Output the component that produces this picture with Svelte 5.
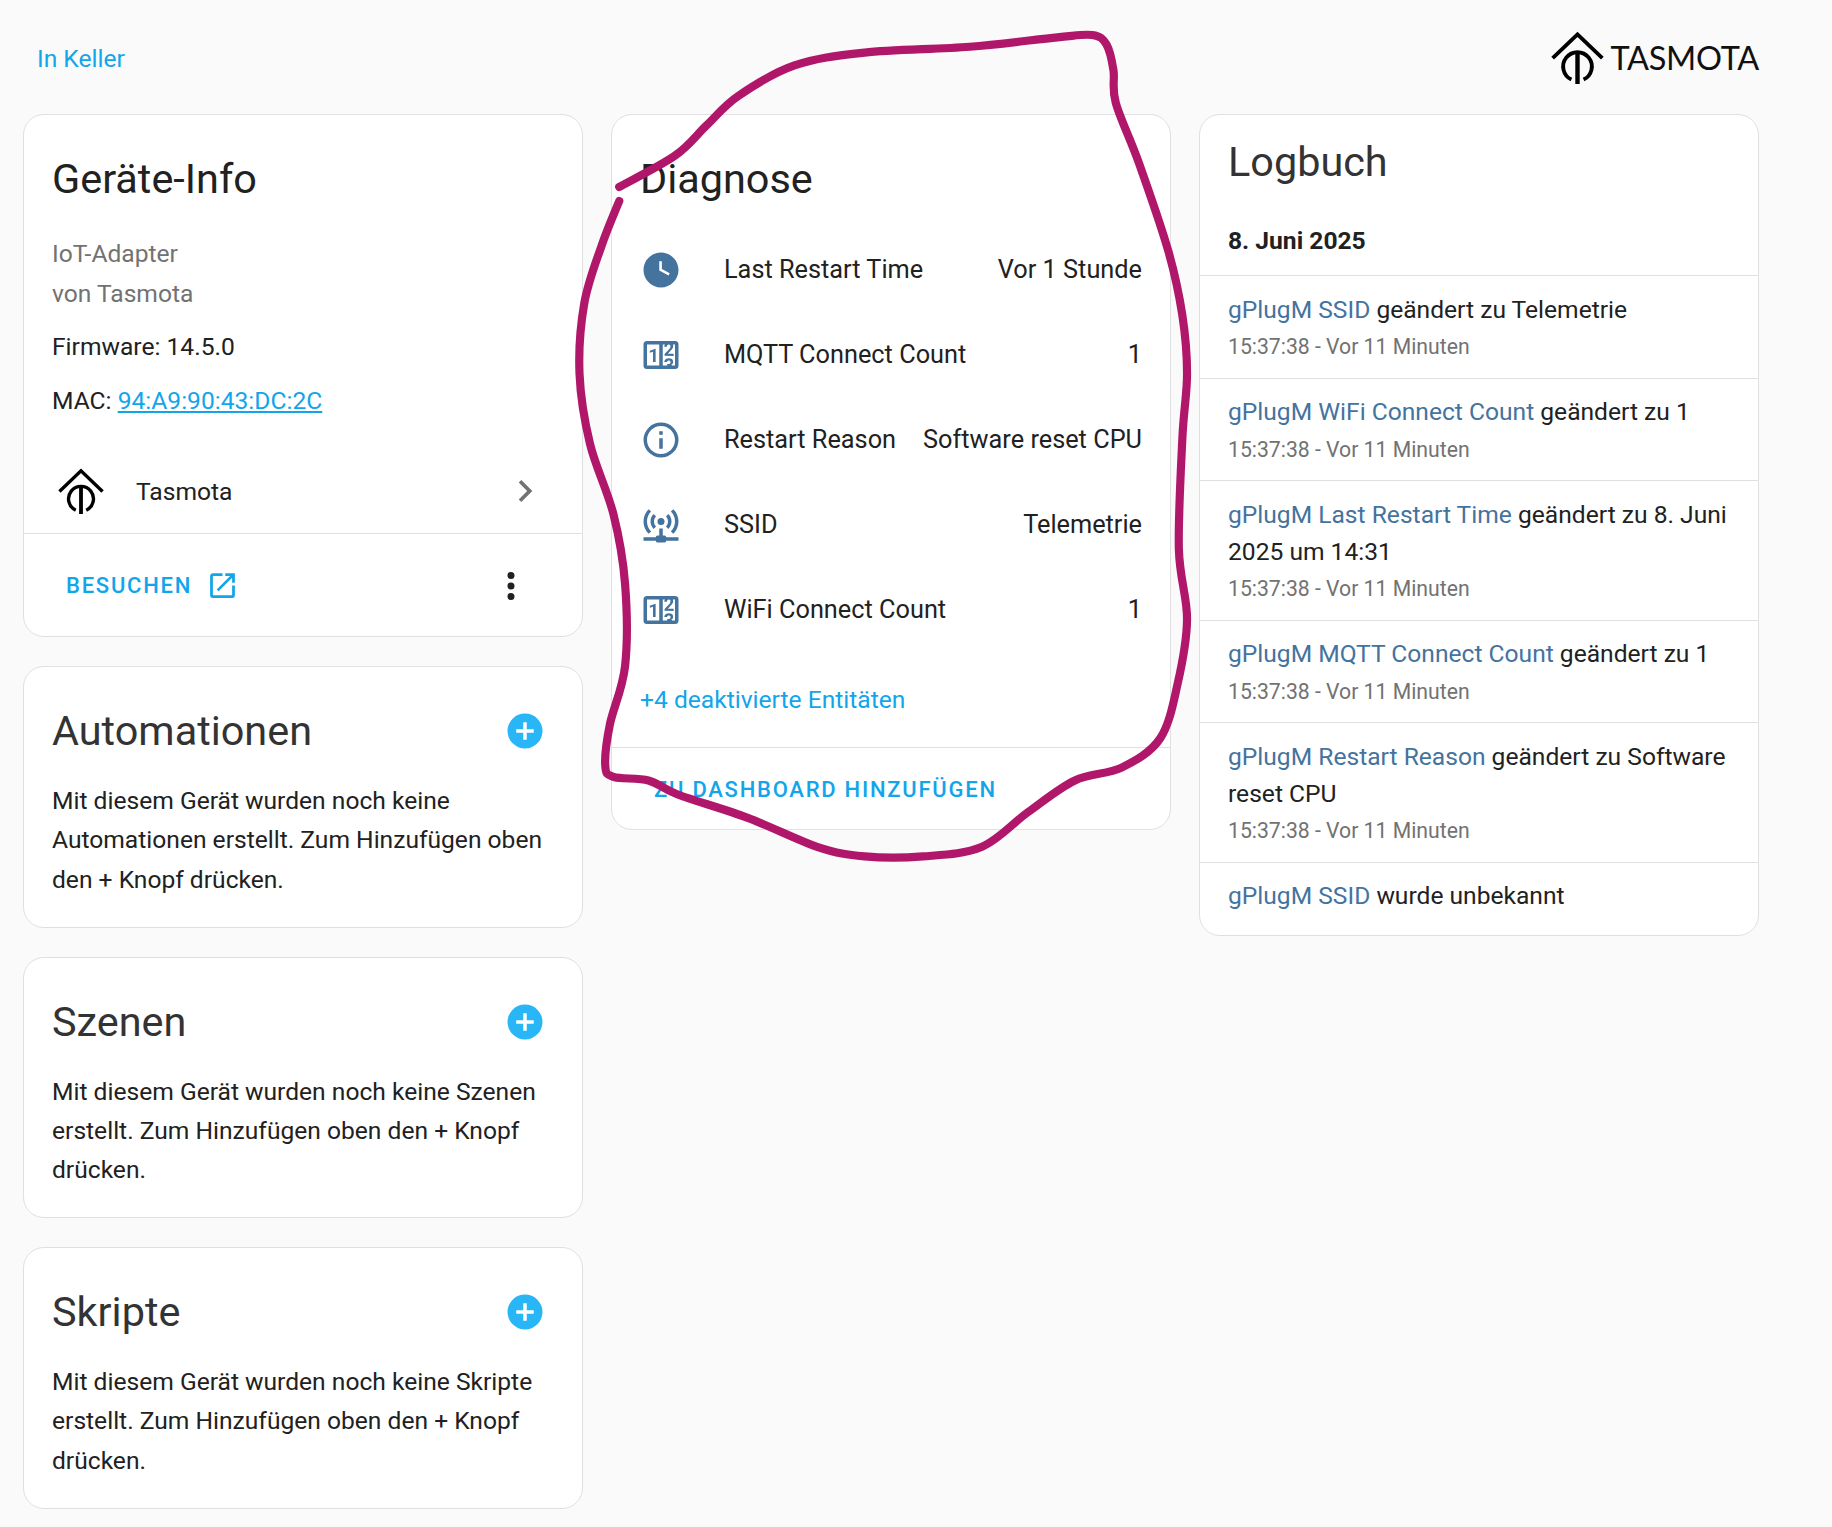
<script>
  const icons = {
    clock: 'M12 2C6.5 2 2 6.5 2 12S6.5 22 12 22 22 17.5 22 12 17.5 2 12 2M16.3 15.2L11 12.3V7H12.5V11.4L17 13.9L16.3 15.2Z',
    counter: 'M4,4H20A2,2 0 0,1 22,6V18A2,2 0 0,1 20,20H4A2,2 0 0,1 2,18V6A2,2 0 0,1 4,4M4,6V18H11V6H4M20,18V6H18.76C19,6.54 18.95,7.07 18.95,7.13C18.88,7.8 18.41,8.5 18.24,8.75L15.91,11.3L19.23,11.28L19.24,12.5L14.04,12.47L14,11.47C14,11.47 17.05,8.24 17.2,7.95C17.34,7.67 17.91,6 16.5,6C15.27,6.05 15.41,7.3 15.41,7.3L13.87,7.31C13.87,7.31 13.88,6.65 14.25,6H13V18H15.58L15.57,17.14L16.54,17.13C16.54,17.13 17.45,16.97 17.46,16.08C17.5,15.08 16.65,15.08 16.5,15.08C16.37,15.08 15.43,15.13 15.43,15.95H13.91C13.91,15.95 13.95,13.89 16.5,13.89C19.1,13.89 18.96,15.91 18.96,15.91C18.96,15.91 19,17.16 17.85,17.63L18.37,18H20M8.92,16H7.42V10.2L5.62,10.76V9.53L8.76,8.41H8.92V16Z',
    info: 'M11,9H13V7H11M12,20C7.59,20 4,16.41 4,12C4,7.59 7.59,4 12,4C16.41,4 20,7.59 20,12C20,16.41 16.41,20 12,20M12,2A10,10 0 0,0 2,12A10,10 0 0,0 12,22A10,10 0 0,0 22,12A10,10 0 0,0 12,2M11,17H13V11H11V17Z',
    network: 'M4.93,2.93C3.12,4.74 2,7.24 2,10C2,12.76 3.12,15.26 4.93,17.07L6.34,15.66C4.89,14.22 4,12.22 4,10C4,7.79 4.89,5.78 6.34,4.34L4.93,2.93M19.07,2.93L17.66,4.34C19.11,5.78 20,7.79 20,10C20,12.22 19.11,14.22 17.66,15.66L19.07,17.07C20.88,15.26 22,12.76 22,10C22,7.24 20.88,4.74 19.07,2.93M7.76,5.76C6.67,6.85 6,8.35 6,10C6,11.65 6.67,13.15 7.76,14.24L9.17,12.83C8.45,12.11 8,11.11 8,10C8,8.89 8.45,7.89 9.17,7.17L7.76,5.76M16.24,5.76L14.83,7.17C15.55,7.89 16,8.89 16,10C16,11.11 15.55,12.11 14.83,12.83L16.24,14.24C17.33,13.15 18,11.65 18,10C18,8.35 17.33,6.85 16.24,5.76M12,8A2,2 0 0,0 10,10A2,2 0 0,0 12,12A2,2 0 0,0 14,10A2,2 0 0,0 12,8M11,14V18H10A1,1 0 0,0 9,19H2V21H9A1,1 0 0,0 10,22H14A1,1 0 0,0 15,21H22V19H15A1,1 0 0,0 14,18H13V14H11Z',
    open: 'M14,3V5H17.59L7.76,14.83L9.17,16.24L19,6.41V10H21V3M19,19H5V5H12V3H5C3.89,3 3,3.9 3,5V19A2,2 0 0,0 5,21H19A2,2 0 0,0 21,19V12H19V19Z',
    dots: 'M12,16A2,2 0 0,1 14,18A2,2 0 0,1 12,20A2,2 0 0,1 10,18A2,2 0 0,1 12,16M12,10A2,2 0 0,1 14,12A2,2 0 0,1 12,14A2,2 0 0,1 10,12A2,2 0 0,1 12,10M12,4A2,2 0 0,1 14,6A2,2 0 0,1 12,8A2,2 0 0,1 10,6A2,2 0 0,1 12,4Z',
    chevron: 'M8.59,16.58L13.17,12L8.59,7.41L10,6L16,12L10,18L8.59,16.58Z',
    plus: 'M17,13H13V17H11V13H7V11H11V7H13V11H17M12,2A10,10 0 0,0 2,12A10,10 0 0,0 12,22A10,10 0 0,0 22,12A10,10 0 0,0 12,2Z'
  };

  const entities = [
    { icon: 'clock', name: 'Last Restart Time', value: 'Vor 1 Stunde' },
    { icon: 'counter', name: 'MQTT Connect Count', value: '1' },
    { icon: 'info', name: 'Restart Reason', value: 'Software reset CPU' },
    { icon: 'network', name: 'SSID', value: 'Telemetrie' },
    { icon: 'counter', name: 'WiFi Connect Count', value: '1' }
  ];

  const sections = [
    { title: 'Automationen', text: 'Mit diesem Gerät wurden noch keine Automationen erstellt. Zum Hinzufügen oben den + Knopf drücken.' },
    { title: 'Szenen', text: 'Mit diesem Gerät wurden noch keine Szenen erstellt. Zum Hinzufügen oben den + Knopf drücken.' },
    { title: 'Skripte', text: 'Mit diesem Gerät wurden noch keine Skripte erstellt. Zum Hinzufügen oben den + Knopf drücken.' }
  ];

  const log = [
    { name: 'gPlugM SSID', msg: 'geändert zu Telemetrie', time: true },
    { name: 'gPlugM WiFi Connect Count', msg: 'geändert zu 1', time: true },
    { name: 'gPlugM Last Restart Time', msg: 'geändert zu 8. Juni 2025 um 14:31', time: true },
    { name: 'gPlugM MQTT Connect Count', msg: 'geändert zu 1', time: true },
    { name: 'gPlugM Restart Reason', msg: 'geändert zu Software reset CPU', time: true },
    { name: 'gPlugM SSID', msg: 'wurde unbekannt', time: false }
  ];

  // hand-drawn marker line, points in the coordinates of the shrunk screenshot
  const scribble = [
    [530,160],[578,133],[605,107],[632,82],[680,56],[740,45],[830,40],[905,32],[935,30],[947,38],[953,60],[955,88],
    [975,140],[1000,215],[1012,270],[1016,320],[1012,375],[1009,470],[1016,530],[1008,585],[993,632],[960,657],
    [920,668],[880,695],[840,725],[790,733],[740,733],[700,725],[640,700],[580,680],[555,668],[525,665],[518,655],
    [522,620],[535,570],[535,500],[525,440],[505,380],[496,320],[500,260],[515,210],[530,172]
  ];

  function smooth(pts) {
    let d = `M${pts[0][0]},${pts[0][1]}`;
    for (let i = 0; i < pts.length - 1; i++) {
      const p0 = pts[Math.max(i - 1, 0)];
      const p1 = pts[i];
      const p2 = pts[i + 1];
      const p3 = pts[Math.min(i + 2, pts.length - 1)];
      const c1 = [p1[0] + (p2[0] - p0[0]) / 6, p1[1] + (p2[1] - p0[1]) / 6];
      const c2 = [p2[0] - (p3[0] - p1[0]) / 6, p2[1] - (p3[1] - p1[1]) / 6];
      d += `C${c1[0]},${c1[1]} ${c2[0]},${c2[1]} ${p2[0]},${p2[1]}`;
    }
    return d;
  }
</script>

{#snippet logo(size)}
  <svg class="logo" width={size} height={size} viewBox="0 0 48 48" fill="none" stroke="#000">
    <path d="M1.5 24.5L24 3L46.5 24.5" stroke-width="3.5" />
    <path d="M18.5 44A13 13 0 1 1 29.5 44" stroke-width="3.5" />
    <path d="M24 48V19" stroke-width="4" />
  </svg>
{/snippet}

{#snippet icon(name, cls)}
  <svg class={cls} viewBox="0 0 24 24"><path d={icons[name]} fill="currentColor" /></svg>
{/snippet}

<div class="page">
  <header class="top">
    <a class="area">In Keller</a>
    <div class="brand">
      {@render logo(53)}
      <span class="wordmark">TASMOTA</span>
    </div>
  </header>

  <div class="columns">
    <div class="col">
      <section class="card info">
        <h2 class="title dark">Geräte-Info</h2>
        <div class="meta">
          <div class="muted">IoT-Adapter</div>
          <div class="muted">von Tasmota</div>
          <div class="fw">Firmware: 14.5.0</div>
          <div class="fw">MAC: <a class="mac">94:A9:90:43:DC:2C</a></div>
        </div>
        <div class="device">
          {@render logo(46)}
          <span class="device-name">Tasmota</span>
          {@render icon('chevron', 'chev')}
        </div>
        <div class="actions">
          <span class="btn">BESUCHEN</span>
          {@render icon('open', 'open')}
          {@render icon('dots', 'dots')}
        </div>
      </section>

      {#each sections as s}
        <section class="card empty">
          <div class="head">
            <h2 class="title">{s.title}</h2>
            {@render icon('plus', 'plus')}
          </div>
          <p>{s.text}</p>
        </section>
      {/each}
    </div>

    <div class="col">
      <section class="card diag">
        <h2 class="title dark">Diagnose</h2>
        <div class="rows">
          {#each entities as e}
            <div class="row">
              {@render icon(e.icon, 'state')}
              <span class="name">{e.name}</span>
              <span class="value">{e.value}</span>
            </div>
          {/each}
        </div>
        <a class="disabled">+4 deaktivierte Entitäten</a>
        <div class="actions diag-actions">
          <span class="btn">ZU DASHBOARD HINZUFÜGEN</span>
        </div>
      </section>
    </div>

    <div class="col">
      <section class="card book">
        <h2 class="title">Logbuch</h2>
        <div class="date">8. Juni 2025</div>
        {#each log as l}
          <div class="entry">
            <div class="msg"><span class="entity">{l.name}</span> {l.msg}</div>
            {#if l.time}<div class="when">15:37:38 - Vor 11 Minuten</div>{/if}
          </div>
        {/each}
      </section>
    </div>
  </div>

  <svg class="marker" viewBox="0 0 1568 1307" fill="none">
    <path d={smooth(scribble)} stroke="#b0176a" stroke-width="7" stroke-linecap="round" stroke-linejoin="round" />
  </svg>
</div>

<style>
  :global(body) {
    margin: 0;
    background: #fafafa;
  }

  .page {
    position: relative;
    width: 1832px;
    height: 1527px;
    overflow: hidden;
    font-family: Roboto, sans-serif;
    font-size: 24.6px;
    color: #212121;
    box-sizing: border-box;
    padding: 0 0 0 23px;
  }

  .top {
    width: 1736px;
    height: 114px;
    display: flex;
    align-items: center;
    justify-content: space-between;
    box-sizing: border-box;
    padding: 3px 0 0 14px;
  }

  .area {
    color: #12a5ea;
  }

  .brand {
    display: flex;
    align-items: center;
    gap: 6px;
    margin-top: -2px;
  }

  .wordmark {
    font-family: Lato, sans-serif;
    font-size: 32.5px;
    letter-spacing: -0.3px;
    color: #111;
  }

  .logo {
    display: block;
    flex: none;
  }

  .columns {
    display: grid;
    grid-template-columns: repeat(3, 560px);
    column-gap: 28px;
    align-items: start;
  }

  .col {
    display: flex;
    flex-direction: column;
    gap: 29px;
  }

  .card {
    background: #fff;
    border: 1px solid #e0e0e0;
    border-radius: 21px;
    box-sizing: border-box;
    overflow: hidden;
  }

  .title {
    margin: 0;
    font-size: 41.4px;
    font-weight: 400;
    color: #333;
    line-height: 56px;
  }

  .dark {
    color: #212121;
  }

  .info {
    height: 523px;
  }

  .info .title,
  .diag .title {
    padding: 36px 28px 0;
  }

  .meta {
    padding: 27px 28px 0;
  }

  .muted {
    color: #727272;
    height: 40px;
    line-height: 40px;
  }

  .fw {
    height: 40px;
    line-height: 40px;
    margin-top: 14px;
  }

  .meta .muted + .fw {
    margin-top: 13px;
  }

  .mac {
    color: #12a5ea;
    text-decoration: underline;
  }

  .device {
    display: flex;
    align-items: center;
    height: 66px;
    margin-top: 37px;
    padding: 0 35px 0 34px;
  }

  .device-name {
    flex: 1;
    margin-left: 32px;
  }

  .chev {
    width: 44px;
    height: 44px;
    color: #727272;
  }

  .actions {
    display: flex;
    align-items: center;
    height: 108px;
    margin-top: 9px;
    border-top: 1px solid #e0e0e0;
    padding: 0 50px 4px 42px;
    box-sizing: border-box;
  }

  .btn {
    color: #12a5ea;
    font-size: 22px;
    font-weight: 500;
    letter-spacing: 1.75px;
  }

  .open {
    width: 33px;
    height: 33px;
    color: #12a5ea;
    margin-left: 14px;
  }

  .dots {
    width: 42px;
    height: 42px;
    margin-left: auto;
    color: #212121;
  }

  .empty {
    height: 261.5px;
    padding: 0 28px;
  }

  .head {
    display: flex;
    align-items: center;
    justify-content: space-between;
    padding-top: 36px;
    height: 56px;
  }

  .plus {
    width: 42px;
    height: 42px;
    color: #29b6f6;
    margin-right: 8px;
  }

  .empty p {
    margin: 22px 0 0;
    line-height: 39.4px;
  }

  .diag {
    height: 716px;
  }

  .rows {
    margin-top: 20px;
    padding: 0 28px;
    font-size: 25.3px;
  }

  .row {
    display: flex;
    align-items: center;
    height: 85px;
  }

  .state {
    width: 42px;
    height: 42px;
    color: #44739e;
    flex: none;
    margin-right: 42px;
  }

  .name {
    flex: 1;
  }

  .disabled {
    display: block;
    color: #12a5ea;
    padding: 0 28px;
    margin-top: 28px;
    line-height: 40px;
  }

  .diag-actions {
    margin-top: 27px;
    height: 84px;
    padding-bottom: 0;
  }

  .book .title {
    padding: 19px 28px 0;
  }

  .book {
    height: 821.5px;
  }

  .date {
    font-weight: 700;
    padding: 31px 28px 14px;
    line-height: 40px;
  }

  .entry {
    border-top: 1px solid #e0e0e0;
    padding: 14.5px 28px 12.5px;
  }

  .msg {
    line-height: 37px;
  }

  .entity {
    color: #44739e;
  }

  .when {
    color: #727272;
    font-size: 21.2px;
    line-height: 37px;
    margin-top: 0.5px;
  }

  .marker {
    position: absolute;
    left: 0;
    top: 0;
    width: 1832px;
    height: 1527px;
    pointer-events: none;
  }
</style>
